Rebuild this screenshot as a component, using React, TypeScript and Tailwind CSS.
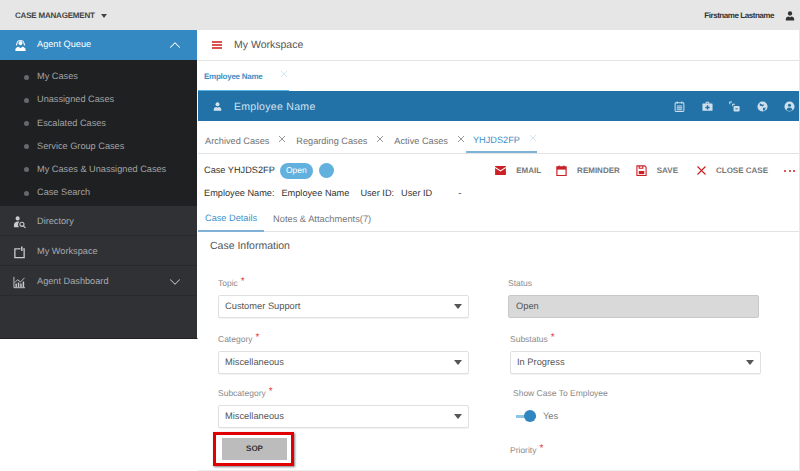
import React from "react";
import { ChevronUp, ChevronDown } from "lucide-react";

const font = { fontFamily: '"Liberation Sans", Arial, sans-serif' };

function PersonIcon({ className = "" }: { className?: string }) {
  return (
    <svg viewBox="0 0 12 12" className={className} fill="currentColor">
      <circle cx="6" cy="3" r="2.6" />
      <path d="M1 11.5V9.6C1 8 2.6 6.8 4.2 6.6L6 7.6l1.8-1C9.4 6.8 11 8 11 9.6v1.9z" />
    </svg>
  );
}

function CloseMark({ className = "" }: { className?: string }) {
  return (
    <svg viewBox="0 0 8 8" className={`w-[8px] h-[8px] shrink-0 ${className}`} fill="none" stroke="currentColor" strokeWidth="0.9">
      <path d="M1 1l6 6M7 1 1 7" />
    </svg>
  );
}

function AgentIcon() {
  return (
    <svg viewBox="0 0 14 14" className="w-[13px] h-[13px] text-white" fill="currentColor">
      <circle cx="7" cy="4.4" r="2.2" />
      <path d="M2.8 5.2a4.2 4.2 0 1 1 8.4 0h-1a3.2 3.2 0 1 0-6.4 0z" />
      <rect x="2.2" y="4.6" width="1.2" height="2.4" rx=".5" />
      <rect x="10.6" y="4.6" width="1.2" height="2.4" rx=".5" />
      <path d="M1.5 13v-1.6C1.5 9.8 3.4 8.6 5 8.4L7 10l2-1.6c1.6.2 3.5 1.4 3.5 3V13z" />
    </svg>
  );
}

function DirectoryIcon() {
  return (
    <svg viewBox="0 0 14 14" className="w-[13px] h-[13px] text-[#c9cacc]" fill="currentColor">
      <circle cx="5" cy="2.6" r="2.2" />
      <path d="M1 12V9.4C1 7.4 3 6 5.4 6c.6 0 1.2.1 1.6.3A3.6 3.6 0 0 0 6.6 12z" />
      <circle cx="9.6" cy="9" r="2.2" fill="none" stroke="currentColor" strokeWidth="1.2" />
      <path d="M11.2 10.6 13.4 12.8" stroke="currentColor" strokeWidth="1.3" />
    </svg>
  );
}

function WorkspaceIcon() {
  return (
    <svg viewBox="0 0 14 14" className="w-[13px] h-[13px] text-[#c9cacc]" fill="none" stroke="currentColor" strokeWidth="1.4">
      <path d="M5 3H2v9.500h10V3h-1" />
      <path d="M5 3h3" />
      <path d="M9.500 .5v5" strokeWidth="1.600" />
    </svg>
  );
}

function DashboardIcon() {
  return (
    <svg viewBox="0 0 14 14" className="w-[13px] h-[13px] text-[#c9cacc]" fill="none" stroke="currentColor">
      <path d="M1 1v11.600h12" strokeWidth="1" />
      <path d="M2 7l3-3 3 2.400L12.400 2" strokeWidth="1" />
      <path d="M3.400 12V8M6 12V7M8.600 12V8M11.200 12V6" strokeWidth="1.600" />
    </svg>
  );
}

function SideRow({ icon, label, chevron }: { icon: React.ReactNode; label: string; chevron?: boolean }) {
  return (
    <div className="h-[30px] flex items-center pl-[13px] pr-[13px] pt-[3px] border-b border-[#28292c]">
      <span className="w-[24px] flex items-center">{icon}</span>
      <span className="text-[9.2px] text-[#a9abae] flex-1">{label}</span>
      {chevron && <ChevronDown className="w-[18px] h-[18px] text-[#b9babc]" strokeWidth={1.4} />}
    </div>
  );
}

function SubItem({ label }: { label: string }) {
  return (
    <div className="h-[23.2px] flex items-center pl-[24px]">
      <span className="w-[5px] h-[5px] rounded-full bg-[#66686b] mr-[8px]" />
      <span className="text-[9.2px] text-[#a3a4a6]">{label}</span>
    </div>
  );
}

function CaseTab({ label, active, pr }: { label: string; active?: boolean; pr: string }) {
  return (
    <div className={`h-full flex items-center pl-[7px] pt-[8px] ${pr} ${active ? "border-b-2 border-[#7fb2d6]" : ""}`}>
      <span className={`text-[9.2px] mr-[9px] ${active ? "text-[#3f8fc6]" : "text-[#6f7072]"}`}>{label}</span>
      <CloseMark className={`-mt-[6px] ${active ? "text-[#cfe2f0]" : "text-[#8b8c8e]"}`} />
    </div>
  );
}

function Label({ text, req }: { text: string; req?: boolean }) {
  return (
    <div className="h-[12px] flex items-start text-[8.5px] text-[#8a8a8a] leading-[12px]">
      {text}
      {req && <span className="text-[#e8403f] text-[10px] ml-[3px] leading-[10px]">*</span>}
    </div>
  );
}

function Select({ value }: { value: string }) {
  return (
    <div className="h-[23px] mt-[6px] border border-[#e0e0e0] rounded-[2px] shadow-[0_1px_1px_rgba(0,0,0,0.06)] bg-white flex items-center pl-[6px] pr-[5px] text-[9.3px] text-[#555]">
      <span className="flex-1 pt-[1px]">{value}</span>
      <span className="mr-[1px] w-0 h-0 border-l-[4px] border-r-[4px] border-t-[5px] border-l-transparent border-r-transparent border-t-[#555]" />
    </div>
  );
}

function Action({ icon, label, mr, w = "w-[11px]" }: { icon: React.ReactNode; label: string; mr: string; w?: string }) {
  return (
    <div className={`flex items-center gap-[10px] ${mr}`}>
      <span className={`${w} flex justify-center`}>{icon}</span>
      <span className="text-[8px] font-bold text-[#77787a] whitespace-nowrap">{label}</span>
    </div>
  );
}

function HeaderIcons() {
  return (
    <div className="flex items-center gap-[16.500px] text-[#cfe0ec]">
      <svg viewBox="0 0 12 12" className="w-[11px] h-[11px]" fill="none" stroke="currentColor" strokeWidth="1.1">
        <rect x="1.2" y="2" width="9.6" height="9.4" rx="1" />
        <path d="M3.5.5v2.6M8.5.5v2.6M3 5.500h6M3 7.500h6M3 9.500h6" />
      </svg>
      <svg viewBox="0 0 12 12" className="w-[11px] h-[11px]" fill="currentColor">
        <path d="M4 2.6V1.4C4 1 4.3.8 4.7.8h2.600c.4 0 .7.2.7.6v1.2h2.900c.4 0 .6.3.6.7v6.800c0 .4-.2.6-.6.6H1.100c-.4 0-.6-.2-.6-.6V3.300c0-.4.2-.7.6-.7zm1-.8v.8h2v-.8z" />
        <path d="M5.200 4.600h1.600v1.600h1.600v1.600H6.800v1.600H5.200V7.800H3.600V6.200h1.600z" fill="#2272a8" />
      </svg>
      <svg viewBox="0 0 12 12" className="w-[11px] h-[11px]" fill="none" stroke="currentColor" strokeWidth="1.1">
        <path d="M.8 3.500V1h2.500M4 5.800V3.500h2.500" />
        <rect x="5.500" y="6" width="5.500" height="5" rx=".6" fill="currentColor" />
        <path d="M7 8.500h2.500" stroke="#2272a8" />
      </svg>
      <svg viewBox="0 0 12 12" className="w-[11px] h-[11px]" fill="currentColor">
        <circle cx="6" cy="6" r="5.500" />
        <path d="M3 2.500l3 1.500 2-.5L6.500 6 4.500 5.500 3 5zM6.500 7.500l3-.5-1 3-2 .5z" fill="#2272a8" />
      </svg>
      <svg viewBox="0 0 12 12" className="w-[11px] h-[11px]" fill="currentColor">
        <circle cx="6" cy="6" r="5.500" />
        <circle cx="6" cy="4.600" r="1.700" fill="#2272a8" />
        <path d="M2.800 9.500c.4-1.500 1.700-2.300 3.200-2.300s2.800.8 3.200 2.300a4.500 4.500 0 0 1-6.400 0z" fill="#2272a8" />
      </svg>
    </div>
  );
}

export default function App() {
  return (
    <div className="w-[800px] h-[471px] overflow-hidden bg-white flex flex-col [text-rendering:geometricPrecision]" style={font}>
      <div className="h-[30px] shrink-0 bg-[#e6e6e6] flex items-center pl-[15px] pr-[5px] pt-[1px]">
        <span className="text-[8px] font-bold text-[#444] whitespace-nowrap tracking-[-0.2px]">CASE MANAGEMENT</span>
        <span className="ml-[6px] w-0 h-0 border-l-[3.500px] border-r-[3.500px] border-t-[4px] border-l-transparent border-r-transparent border-t-[#444]" />
        <span className="ml-auto text-[8px] font-bold text-[#333] whitespace-nowrap tracking-[-0.45px]">Firstname Lastname</span>
        <PersonIcon className="ml-[11px] w-[10px] h-[10px] text-[#333]" />
      </div>
      <div className="flex flex-1 min-h-0 items-start">
        <aside className="w-[198px] h-[309px] shrink-0 bg-[#303135] border-r border-white border-b border-b-[#222] flex flex-col">
          <div className="h-[30px] bg-[#3589c2] flex items-center pl-[14px] pr-[13px]">
            <span className="w-[23px] flex"><AgentIcon /></span>
            <span className="text-[9.2px] text-white flex-1">Agent Queue</span>
            <ChevronUp className="w-[18px] h-[18px] text-white" strokeWidth={1.4} />
          </div>
          <div className="h-[146px] bg-[#1f2022] flex flex-col pt-[5.500px]">
            {["My Cases", "Unassigned Cases", "Escalated Cases", "Service Group Cases", "My Cases & Unassigned Cases", "Case Search"].map((s) => (
              <SubItem key={s} label={s} />
            ))}
          </div>
          <SideRow icon={<DirectoryIcon />} label="Directory" />
          <SideRow icon={<WorkspaceIcon />} label="My Workspace" />
          <SideRow icon={<DashboardIcon />} label="Agent Dashboard" chevron />
        </aside>
        <main className="flex-1 min-w-0 h-full flex flex-col border-r border-[#e8e8e8]">
          <div className="h-[31px] shrink-0 border-b border-[#e3e3e3] flex items-center pl-[14px]">
            <span className="w-[10px] h-[8px] flex flex-col justify-between mr-[12px]">
              <span className="h-[2px] bg-[#d9534f]" />
              <span className="h-[2px] bg-[#d9534f]" />
              <span className="h-[2px] bg-[#d9534f]" />
            </span>
            <span className="text-[10.500px] text-[#555] pt-[2px]">My Workspace</span>
          </div>
          <div className="h-[30px] shrink-0 flex">
            <div className="w-[91px] h-full border-b border-[#58b4e6] flex items-center pl-[6px] pt-[3px]">
              <span className="text-[8px] font-bold text-[#3f8fc6] mr-[17px] whitespace-nowrap tracking-[-0.25px]">Employee Name</span>
              <CloseMark className="-mt-[6px] text-[#cfe2f0]" />
            </div>
          </div>
          <div className="h-[30px] shrink-0 bg-[#2272a8] flex items-center pl-[15px] pr-[4px]">
            <PersonIcon className="w-[9px] h-[9px] text-[#d3e3ee] mr-[12px]" />
            <span className="text-[10.500px] tracking-[0.3px] text-[#d3e3ee] flex-1 pt-[3px]">Employee Name</span>
            <HeaderIcons />
          </div>
          <div className="h-[33px] shrink-0 border-b border-[#e3e3e3] flex items-stretch pt-[1px]">
            <CaseTab label="Archived Cases" pr="pr-[3px]" />
            <CaseTab label="Regarding Cases" pr="pr-[3px]" />
            <CaseTab label="Active Cases" pr="pr-[1px]" />
            <CaseTab label="YHJDS2FP" active pr="pr-0" />
          </div>
          <div className="h-[51px] shrink-0 pl-[6px] pr-[4px] pt-[8px]">
            <div className="flex items-center h-[17px]">
              <span className="text-[9.200px] text-[#333] mr-[5px]">Case YHJDS2FP</span>
              <span className="w-[33px] h-[16px] rounded-full bg-[#62b0de] text-white text-[8.500px] flex items-center justify-center">Open</span>
              <span className="ml-[6px] w-[15px] h-[15px] rounded-full bg-[#62b0de]" />
              <div className="ml-auto flex items-center">
                <Action mr="mr-[15px]" label="EMAIL" icon={
                  <svg viewBox="0 0 12 10" className="w-[11px] h-[9px]"><rect width="12" height="10" fill="#cb2026" /><path d="M0 1.500 6 5.500 12 1.500" fill="none" stroke="#fff" strokeWidth="1.200" /></svg>} />
                <Action mr="mr-[16px]" label="REMINDER" icon={
                  <svg viewBox="0 0 12 12" className="w-[11px] h-[11px]"><path d="M1 2h10v9.500H1z" fill="none" stroke="#cb2026" strokeWidth="1.300" /><rect x="1" y="2" width="10" height="3" fill="#cb2026" /><path d="M3.500 .5v2M8.500 .5v2" stroke="#cb2026" strokeWidth="1.200" /></svg>} />
                <Action mr="mr-[19px]" label="SAVE" icon={
                  <svg viewBox="0 0 12 12" className="w-[11px] h-[11px]" fill="none" stroke="#cb2026" strokeWidth="1.200"><path d="M1 1h8.500L11 2.500v9H1z" /><path d="M3.500 1v2.500h4V1" /><rect x="3" y="6.500" width="6" height="3.500" fill="#cb2026" stroke="none" /></svg>} />
                <Action mr="mr-[16px]" w="w-[9px]" label="CLOSE CASE" icon={
                  <svg viewBox="0 0 9 9" className="w-[9px] h-[9px]" fill="none" stroke="#cb2026" strokeWidth="1.100"><path d="M.5.5l8 8M8.500.5l-8 8" /></svg>} />
                <span className="flex gap-[2.500px]">
                  <span className="w-[2px] h-[2px] rounded-full bg-[#cb2026]" />
                  <span className="w-[2px] h-[2px] rounded-full bg-[#cb2026]" />
                  <span className="w-[2px] h-[2px] rounded-full bg-[#cb2026]" />
                </span>
              </div>
            </div>
            <div className="flex items-center h-[13px] mt-[8px] text-[9.200px] text-[#333]">
              <span className="mr-[7px]">Employee Name:</span>
              <span className="mr-[11px]">Employee Name</span>
              <span className="mr-[7px]">User ID:</span>
              <span className="mr-[26px]">User ID</span>
              <span>-</span>
            </div>
          </div>
          <div className="h-[27px] shrink-0 border-b border-[#e3e3e3] flex items-stretch">
            <div className="w-[66px] border-b-2 border-[#7fb2d6] flex items-center pl-[7px] pt-[3px] h-[27px] text-[9.200px] text-[#3f8fc6]">Case Details</div>
            <div className="flex items-center pl-[9px] pt-[3px] text-[9.300px] text-[#777]">Notes &amp; Attachments(7)</div>
          </div>
          <div className="pl-[12px] pt-[7px] h-[24px] text-[10.500px] text-[#555] shrink-0">Case Information</div>
          <div className="flex-1 min-h-0 grid grid-cols-[292px_1fr] pl-[20px] pt-[21px] border-b border-[#eee]">
            <div className="flex flex-col w-[251px]">
              <Label text="Topic" req />
              <Select value="Customer Support" />
              <div className="h-[15px] shrink-0" />
              <Label text="Category" req />
              <Select value="Miscellaneous" />
              <div className="h-[13px] shrink-0" />
              <Label text="Subcategory" req />
              <Select value="Miscellaneous" />
              <div className="mt-[4px] -ml-[5px] w-[81px] h-[34px] shrink-0 border-[3px] border-[#e00000] shadow-[1px_1px_2px_rgba(0,0,0,0.5)] flex items-center justify-center pl-[2px]">
                <span className="w-[65px] h-[22px] bg-[#bcbcbc] flex items-center justify-center text-[8px] font-bold text-[#333]">SOP</span>
              </div>
            </div>
            <div className="flex flex-col">
              <div className="w-[251px] -ml-[2px]">
                <Label text="Status" />
                <div className="h-[23px] mt-[6px] border border-[#c8c8c8] rounded-[2px] bg-[#d9d9d9] flex items-center pl-[7px] pt-[1px] text-[9.300px] text-[#555]">Open</div>
              </div>
              <div className="h-[15px] shrink-0" />
              <div className="w-[251px]">
                <Label text="Substatus" req />
                <Select value="In Progress" />
              </div>
              <div className="h-[13px] shrink-0" />
              <div className="pl-[3px]">
                <Label text="Show Case To Employee" />
                <div className="mt-[10px] flex items-center h-[14px] pl-[3px]">
                  <span className="relative w-[20px] h-[3px] bg-[#8cc4e6]">
                    <span className="absolute right-0 -top-[5px] w-[12px] h-[12px] rounded-full bg-[#2f86c1]" />
                  </span>
                  <span className="ml-[7px] text-[9.300px] text-[#777] pt-[1px]">Yes</span>
                </div>
              </div>
              <div className="h-[21px] shrink-0" />
              <Label text="Priority" req />
            </div>
          </div>
        </main>
      </div>
    </div>
  );
}
